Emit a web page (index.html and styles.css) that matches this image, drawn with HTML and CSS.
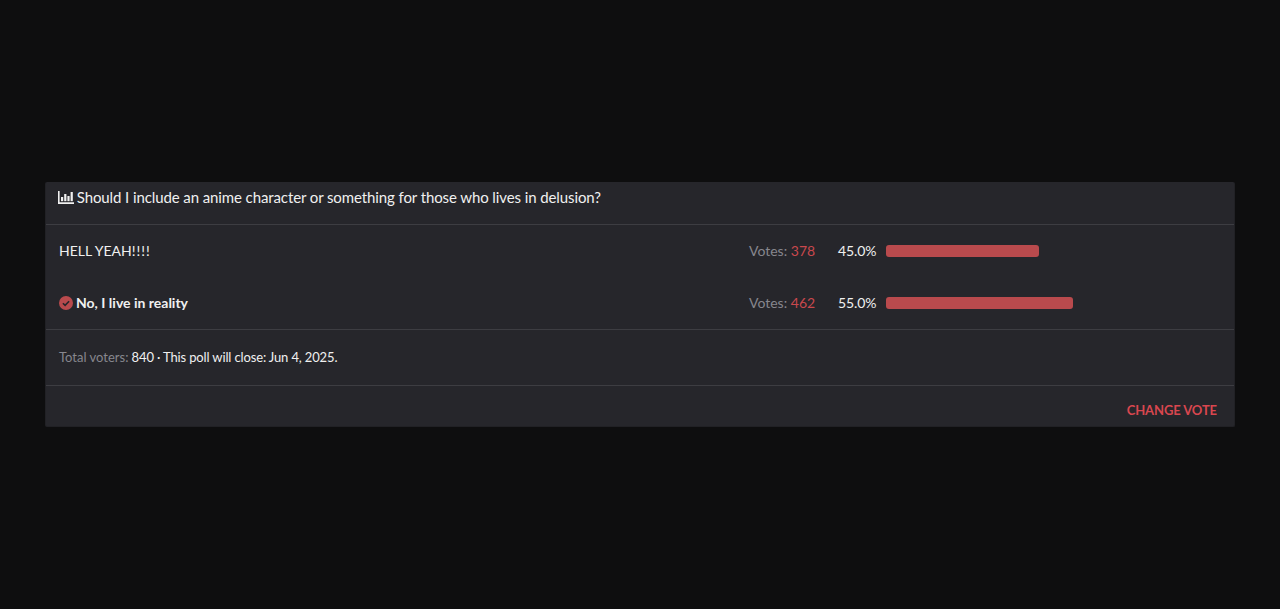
FILE: index.html
```html
<!DOCTYPE html>
<html lang="en">
<head>
  <meta charset="UTF-8">
  <title>Poll</title>
  <link rel="stylesheet" href="styles.css">
</head>
<body>
  <div class="poll">
    <div class="poll-header">
      <svg class="chart-icon" viewBox="0 0 16 13" width="16" height="13" aria-hidden="true">
        <path d="M0 0h1.6v11.2H16V13H0z"/>
        <rect x="3" y="6" width="2.2" height="4.2"/>
        <rect x="6.2" y="3" width="2.2" height="7.2"/>
        <rect x="9.4" y="5" width="2.2" height="5.2"/>
        <rect x="12.6" y="1" width="2.2" height="9.2"/>
      </svg>
      Should I include an anime character or something for those who lives in delusion?
    </div>

    <div class="poll-rows">
      <div class="poll-row">
        <div class="option">HELL YEAH<span class="bangs">!!!!</span></div>
        <div class="votes">Votes: <span class="count">378</span></div>
        <div class="percent">45.0%</div>
        <div class="track"><div class="bar" style="width: 45%"></div></div>
      </div>
      <div class="poll-row">
        <div class="option option-voted">
          <svg class="check-icon" viewBox="0 0 14 14" width="14" height="14" aria-hidden="true">
            <circle cx="7" cy="7" r="7"/>
            <path d="M3.9 7.2l2.2 2.2 4-4.2"/>
          </svg>
          <span>No, I live in reality</span>
        </div>
        <div class="votes">Votes: <span class="count">462</span></div>
        <div class="percent">55.0%</div>
        <div class="track"><div class="bar" style="width: 55%"></div></div>
      </div>
    </div>

    <div class="poll-info">
      <span class="muted">Total voters:</span> 840 · This poll will close: Jun 4, 2025.
    </div>

    <div class="poll-footer">
      <a class="change-vote" href="#">CHANGE VOTE</a>
    </div>
  </div>
</body>
</html>
```

FILE: styles.css
```css
body {
  margin: 0;
  height: 609px;
  overflow: hidden;
  padding: 182px 45px 0;
  box-sizing: border-box;
  background-color: #0e0e0f;
  color: #f0f0f0;
  font-family: Lato, "Liberation Sans", sans-serif;
}

.poll {
  height: 245px;
  box-sizing: border-box;
  background-color: #26262b;
  border: 1px solid #212125;
  border-top: none;
  border-radius: 2px;
  display: flex;
  flex-direction: column;
}

.poll-header {
  height: 43px;
  box-sizing: border-box;
  padding: 5px 12px 0;
  border-bottom: 1px solid #3d3d42;
  font-size: 15px;
  line-height: 20px;
  letter-spacing: -0.1px;
}

.chart-icon {
  fill: #f0f0f0;
  margin-right: -1px;
  vertical-align: -1px;
}

.poll-rows {
  height: 105px;
  box-sizing: border-box;
  border-bottom: 1px solid #3d3d42;
}

.poll-row {
  height: 52px;
  padding-left: 13px;
  display: flex;
  align-items: center;
  font-size: 14px;
}

.option {
  width: 690px;
  margin-top: -1px;
}

.bangs {
  letter-spacing: 1px;
}

.option-voted {
  display: flex;
  align-items: center;
  gap: 3px;
  font-weight: 700;
}

.check-icon circle {
  fill: #b94a4d;
}

.check-icon path {
  fill: none;
  stroke: #26262b;
  stroke-width: 1.6;
}

.votes {
  width: 89px;
  margin-top: -1px;
  color: #87878e;
  white-space: nowrap;
}

.count {
  color: #c9484d;
}

.percent {
  width: 48px;
  margin-top: -1px;
  letter-spacing: -0.1px;
}

.track {
  width: 340px;
}

.bar {
  height: 12px;
  background-color: #b94a4d;
  border-radius: 3px;
}

.poll-info {
  height: 56px;
  box-sizing: border-box;
  padding: 18px 13px 0;
  border-bottom: 1px solid #3d3d42;
  font-size: 13px;
  line-height: 19px;
  letter-spacing: -0.14px;
}

.muted {
  color: #87878e;
  letter-spacing: 0;
}

.poll-footer {
  flex: 1;
  padding: 15px 17px 0 13px;
  text-align: right;
  font-size: 13px;
  line-height: 18px;
  letter-spacing: -0.1px;
}

.change-vote {
  color: #d9464f;
  font-weight: 700;
  text-decoration: none;
}
```
